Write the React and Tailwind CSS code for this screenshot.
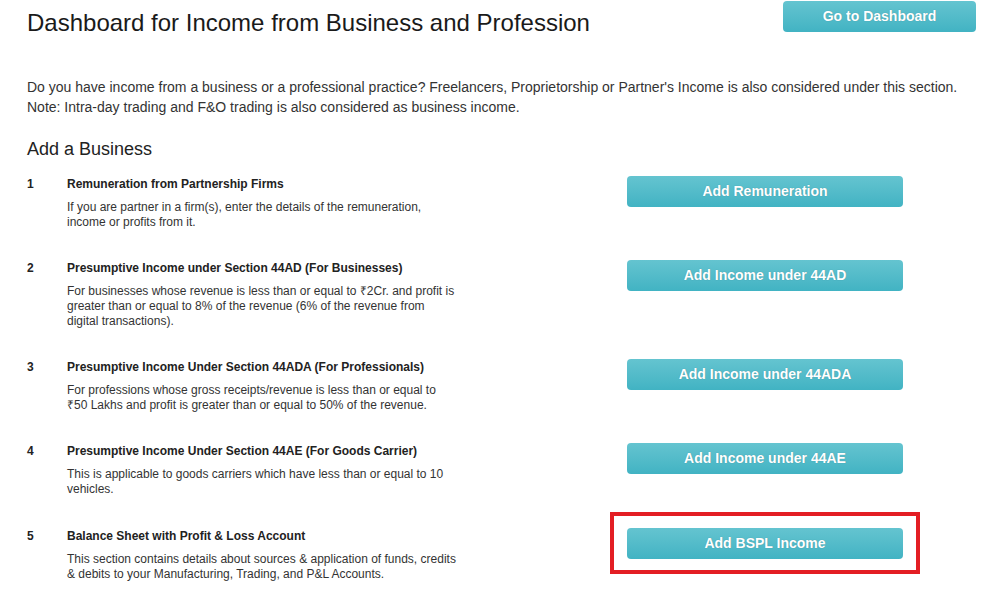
const ROWS = [
  {
    n: '1',
    title: 'Remuneration from Partnership Firms',
    desc: 'If you are partner in a firm(s), enter the details of the remuneration, income or profits from it.',
    btn: 'Add Remuneration',
  },
  {
    n: '2',
    title: 'Presumptive Income under Section 44AD (For Businesses)',
    desc: 'For businesses whose revenue is less than or equal to ₹2Cr. and profit is greater than or equal to 8% of the revenue (6% of the revenue from digital transactions).',
    btn: 'Add Income under 44AD',
  },
  {
    n: '3',
    title: 'Presumptive Income Under Section 44ADA (For Professionals)',
    desc: 'For professions whose gross receipts/revenue is less than or equal to ₹50 Lakhs and profit is greater than or equal to 50% of the revenue.',
    btn: 'Add Income under 44ADA',
  },
  {
    n: '4',
    title: 'Presumptive Income Under Section 44AE (For Goods Carrier)',
    desc: 'This is applicable to goods carriers which have less than or equal to 10 vehicles.',
    btn: 'Add Income under 44AE',
  },
  {
    n: '5',
    title: 'Balance Sheet with Profit & Loss Account',
    desc: 'This section contains details about sources & application of funds, credits & debits to your Manufacturing, Trading, and P&L Accounts.',
    btn: 'Add BSPL Income',
    highlight: true,
  },
]

function TealButton({ children, className = '' }) {
  return (
    <button
      className={`h-[31px] rounded-[4px] bg-gradient-to-b from-[#64c4d0] to-[#41b3c3] text-white text-[14px] font-bold [text-shadow:0_0_1px_rgba(0,0,0,0.25)] ${className}`}
    >
      {children}
    </button>
  )
}

export default function App() {
  return (
    <div className="w-[985px] h-[593px] overflow-hidden bg-white pl-[27px] pr-[9px] text-[#333] font-['Liberation_Sans',Arial,sans-serif]">
      <div className="flex justify-between items-start">
        <h1 className="mt-[9px] text-[24px] leading-[28px] text-[#1a1a1a]">Dashboard for Income from Business and Profession</h1>
        <TealButton className="mt-[1px] w-[193px]">Go to Dashboard</TealButton>
      </div>

      <p className="mt-[40px] text-[14px] leading-[20px] text-[#333]">
        Do you have income from a business or a professional practice? Freelancers, Proprietorship or Partner's Income is also considered under this section.
        <br />
        Note: Intra-day trading and F&amp;O trading is also considered as business income.
      </p>

      <h2 className="mt-[21px] text-[18px] leading-[22px] text-[#222]">Add a Business</h2>

      <div className="mt-[16px] flex flex-col gap-[30px]">
        {ROWS.map((r) => (
          <div key={r.n} className={`flex items-start ${r.highlight ? 'mt-[1px]' : ''}`}>
            <div className="w-[40px] text-[12px] leading-[16px] font-bold text-[#222]">{r.n}</div>
            <div className="w-[392px]">
              <div className="text-[12px] leading-[16px] font-bold text-[#222]">{r.title}</div>
              <div className="mt-[8px] text-[12px] leading-[15px] text-[#333]">{r.desc}</div>
            </div>
            <div className="relative ml-[168px]">
              <TealButton className="w-[276px]">{r.btn}</TealButton>
              {r.highlight && (
                <div className="absolute left-[-17px] right-[-17px] top-[-16px] bottom-[-15px] border-[4px] border-[#e31e24]" />
              )}
            </div>
          </div>
        ))}
      </div>
    </div>
  )
}
